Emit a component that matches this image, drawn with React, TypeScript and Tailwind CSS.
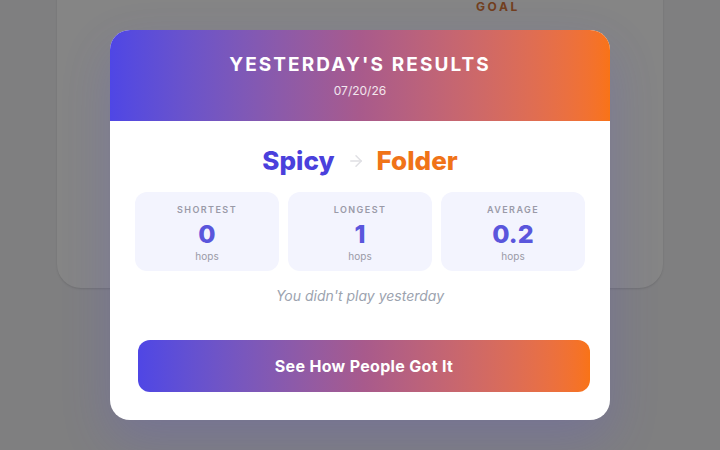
import { ArrowRight } from "lucide-react";

const stats = [
	{ label: "SHORTEST", value: "0" },
	{ label: "LONGEST", value: "1" },
	{ label: "AVERAGE", value: "0.2" },
];

const App = () => {
	return (
		<main
			className="relative h-[450px] w-[720px] overflow-hidden bg-[#f4f4f6]"
			style={{ fontFamily: "Inter, 'Noto Sans', sans-serif" }}
		>
			{/* page behind the dialog */}
			<div className="px-[57px]">
				<div className="-mt-[40px] h-[328px] rounded-[24px] bg-white shadow-sm">
					<div className="flex justify-end pr-[143px] pt-[40px]">
						<span className="text-[12px] font-bold leading-[14px] tracking-[0.22em] text-[#dc7a3a]">
							GOAL
						</span>
					</div>
				</div>
			</div>

			{/* overlay */}
			<div className="absolute inset-0 flex items-center justify-center bg-black/[0.48]">
				<div className="w-[500px] overflow-hidden rounded-[20px] bg-white shadow-[0_20px_50px_rgba(79,70,229,0.2)]">
					<div className="flex flex-col items-center bg-gradient-to-r from-[#4f46e5] via-[#a85a8c] to-[#f97316] pt-[23px] pb-[22px] text-white">
						<h2 className="text-[19px] font-bold leading-[24px] tracking-[0.11em]">YESTERDAY'S RESULTS</h2>
						<p className="mt-[6px] text-[12px] leading-[16px] text-white/85">07/20/26</p>
					</div>

					<div className="flex flex-col items-center px-[25px] pt-[24px] pb-[28px]">
						<div className="flex items-center gap-[12px] text-[26px] font-extrabold leading-[32px]">
							<span className="text-[#4a40dc]">Spicy</span>
							<ArrowRight className="h-[18px] w-[18px] text-[#e0e0e4]" strokeWidth={2} />
							<span className="text-[#f07318]">Folder</span>
						</div>

						<div className="mt-[15px] grid w-full grid-cols-3 gap-[9px]">
							{stats.map((s) => (
								<div
									key={s.label}
									className="flex h-[79px] flex-col items-center rounded-[12px] bg-[#f3f4fe] pt-[12px]"
								>
									<span className="text-[9px] font-semibold leading-[12px] tracking-[0.16em] text-[#9a9aa8]">
										{s.label}
									</span>
									<span className="mt-[3px] text-[25px] font-extrabold leading-[30px] text-[#5a56dc]">
										{s.value}
									</span>
									<span className="text-[10px] leading-[14px] text-[#9a9aa6]">hops</span>
								</div>
							))}
						</div>

						<p className="mt-[15px] text-[14px] italic leading-[20px] text-[#9ca3af]">
							You didn't play yesterday
						</p>

						<button className="mt-[34px] ml-[3px] h-[52px] w-[452px] self-start rounded-[12px] bg-gradient-to-r from-[#4f46e5] via-[#a85a8c] to-[#f97316] text-[16px] font-bold tracking-[0.02em] text-white">
							See How People Got It
						</button>
					</div>
				</div>
			</div>
		</main>
	);
};

export default App;
